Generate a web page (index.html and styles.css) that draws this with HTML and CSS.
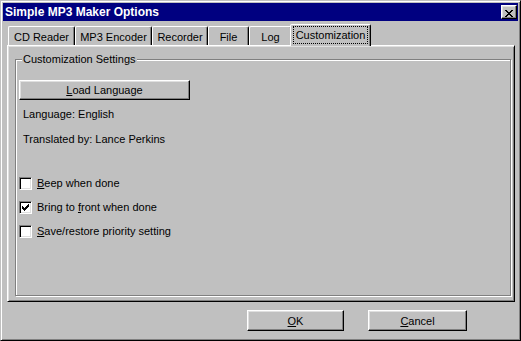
FILE: index.html
```html
<!DOCTYPE html>
<html lang="en">
<head>
    <meta charset="UTF-8">
    <title>Simple MP3 Maker Options</title>
    <link rel="stylesheet" href="styles.css">
</head>
<body>
    <div class="window">
        <!-- title bar -->
        <div class="titlebar">
            <span class="title">Simple MP3 Maker Options</span>
            <button class="close" type="button">
                <svg width="8" height="7" viewBox="0 0 8 7" shape-rendering="crispEdges">
                    <path fill="#000" d="M0 0h2v1H0z M6 0h2v1H6z M1 1h2v1H1z M5 1h2v1H5z M2 2h4v1H2z M3 3h2v1H3z M2 4h4v1H2z M1 5h2v1H1z M5 5h2v1H5z M0 6h2v1H0z M6 6h2v1H6z"/>
                </svg>
            </button>
        </div>

        <!-- tabs -->
        <div class="tabs">
            <div class="tab tab-cd">CD Reader</div>
            <div class="tab tab-mp3">MP3 Encoder</div>
            <div class="tab tab-rec">Recorder</div>
            <div class="tab tab-file">File</div>
            <div class="tab tab-log">Log</div>
            <div class="tab tab-custom active"><span class="focus">Customization</span></div>
        </div>

        <div class="panel">
            <fieldset class="group">
                <legend>Customization Settings</legend>
                <button class="btn load-btn" type="button"><u>L</u>oad Language</button>
                <p class="info first">Language: English</p>
                <p class="info">Translated by: Lance Perkins</p>

                <div class="options">
                    <div class="check">
                        <span class="box"></span>
                        <span><u>B</u>eep when done</span>
                    </div>
                    <div class="check">
                        <span class="box">
                            <svg width="7" height="7" viewBox="0 0 7 7" shape-rendering="crispEdges">
                                <path fill="#000" d="M0 2h1v3H0z M1 3h1v3H1z M2 4h1v3H2z M3 3h1v3H3z M4 2h1v3H4z M5 1h1v3H5z M6 0h1v3H6z"/>
                            </svg>
                        </span>
                        <span>Bring to <u>f</u>ront when done</span>
                    </div>
                    <div class="check">
                        <span class="box"></span>
                        <span><u>S</u>ave/restore priority setting</span>
                    </div>
                </div>
            </fieldset>
        </div>

        <!-- dialog buttons -->
        <div class="footer">
            <button class="btn ok-btn" type="button"><u>O</u>K</button>
            <button class="btn cancel-btn" type="button"><u>C</u>ancel</button>
        </div>
    </div>
</body>
</html>
```

FILE: styles.css
```css
body {
    margin: 0;
    background: #c0c0c0;
}

.window {
    width: 521px;
    height: 341px;
    box-sizing: border-box;
    padding: 2px;
    display: flex;
    flex-direction: column;
    background: #c0c0c0;
    border: 1px solid;
    border-color: #c0c0c0 #000 #000 #c0c0c0;
    box-shadow: inset 1px 1px #fff, inset -1px -1px #808080;
    font: 11px "Liberation Sans", Arial, sans-serif;
    color: #000;
}

/* title bar */
.titlebar {
    height: 18px;
    flex-shrink: 0;
    display: flex;
    align-items: center;
    justify-content: space-between;
    padding: 0 1px 0 2px;
    background: #000080;
    color: #fff;
}

.title {
    font-weight: bold;
    font-size: 12px;
}

.close {
    width: 16px;
    height: 14px;
    box-sizing: border-box;
    margin: 0;
    padding: 2px 0 0 3px;
    display: block;
    background: #c0c0c0;
    border: 1px solid;
    border-color: #fff #000 #000 #fff;
    box-shadow: inset -1px -1px #808080, inset 1px 1px #dfdfdf;
}

.close svg {
    display: block;
}

/* tabs */
.tabs {
    height: 21px;
    margin-top: 3px;
    padding-left: 5px;
    display: flex;
    align-items: flex-end;
    flex-shrink: 0;
}

.tab {
    height: 19px;
    box-sizing: border-box;
    padding-top: 3px;
    line-height: 14px;
    text-align: center;
    border: 1px solid;
    border-bottom: none;
    border-color: #fff #000 transparent #fff;
    border-radius: 2px 2px 0 0;
    box-shadow: inset -1px 0 #808080;
}

.tab-cd { width: 67px; }
.tab-mp3 { width: 77px; }
.tab-rec { width: 56px; }
.tab-file { width: 41px; }
.tab-log { width: 43px; }

.tab.active {
    width: 81px;
    height: 22px;
    margin: 0 -2px -1px;
    padding-top: 2px;
    position: relative;
    z-index: 1;
    background: #c0c0c0;
}

.focus {
    display: inline-block;
    padding: 1px 2px 1px;
    outline: 1px dotted #000;
}

/* main panel */
.panel {
    height: 257px;
    box-sizing: border-box;
    margin: 0 3px 0 4px;
    padding: 7px 2px 4px 7px;
    display: flex;
    flex-direction: column;
    flex-shrink: 0;
    border: 1px solid;
    border-color: #fff #000 #000 #fff;
    box-shadow: inset 1px 1px #dfdfdf, inset -1px -1px #808080;
}

.group {
    flex: 1;
    min-width: 0;
    margin: 0 1px 1px 0;
    padding: 0 0 0 3px;
    border: 1px solid #808080;
    box-shadow: 1px 1px #fff, inset 1px 1px #fff;
}

.group legend {
    margin-left: 3px;
    padding: 0 1px;
    line-height: 13px;
    background: #c0c0c0;
}

.btn {
    box-sizing: border-box;
    margin: 0;
    padding: 0;
    font: 11px "Liberation Sans", Arial, sans-serif;
    color: #000;
    background: #c0c0c0;
    border: 1px solid;
    border-color: #fff #000 #000 #fff;
    box-shadow: inset -1px -1px #808080, inset 1px 1px #dfdfdf;
}

.load-btn {
    display: block;
    width: 171px;
    height: 20px;
    margin-top: 14px;
}

.info {
    margin: 12px 0 0 4px;
    line-height: 13px;
}

.info.first {
    margin-top: 8px;
}

.options {
    margin-top: 31px;
    display: flex;
    flex-direction: column;
    gap: 11px;
}

.check {
    height: 13px;
    line-height: 13px;
    display: flex;
    align-items: center;
    gap: 5px;
}

.box {
    width: 13px;
    height: 13px;
    box-sizing: border-box;
    display: flex;
    align-items: center;
    justify-content: center;
    background: #fff;
    border: 1px solid;
    border-color: #808080 #fff #fff #808080;
    box-shadow: inset 1px 1px #000, inset -1px -1px #dfdfdf;
}

/* OK / Cancel */
.footer {
    padding: 8px 0 0 244px;
    display: flex;
    gap: 24px;
}

.ok-btn {
    width: 97px;
    height: 21px;
}

.cancel-btn {
    width: 99px;
    height: 21px;
}
```
